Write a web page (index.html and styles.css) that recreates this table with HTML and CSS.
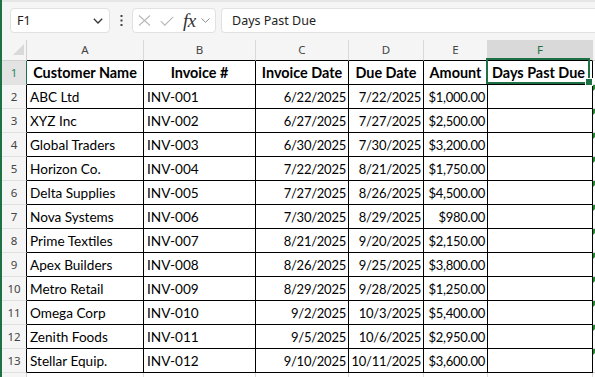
FILE: index.html
```html
<!DOCTYPE html>
<html lang="en">
<head>
    <meta charset="UTF-8">
    <title>Invoices - Sheet1</title>
    <link rel="stylesheet" href="styles.css">
</head>
<body>
    <div class="formula-bar">
        <div class="name-box">
            <span>F1</span>
            <svg width="10" height="6" viewBox="0 0 10 6"><polyline points="0.8,0.8 5,5 9.2,0.8" fill="none" stroke="#333" stroke-width="1.3"/></svg>
        </div>
        <div class="more">
            <svg width="3" height="11" viewBox="0 0 3 11"><rect x="0.5" y="0" width="2" height="2" fill="#444"/><rect x="0.5" y="4.5" width="2" height="2" fill="#444"/><rect x="0.5" y="9" width="2" height="2" fill="#444"/></svg>
        </div>
        <div class="fx-group">
            <svg class="x-icon" width="13" height="11" viewBox="0 0 13 11"><path d="M1 0.5 L12 10.5 M12 0.5 L1 10.5" stroke="#b8b8b8" stroke-width="1.1" fill="none"/></svg>
            <svg class="check-icon" width="14" height="10" viewBox="0 0 14 10"><polyline points="0.8,5.2 4.8,9.2 13.2,0.8" fill="none" stroke="#b8b8b8" stroke-width="1.1"/></svg>
            <span class="fx">fx</span>
            <svg width="9" height="5" viewBox="0 0 9 5"><polyline points="0.5,0.5 4.5,4.3 8.5,0.5" fill="none" stroke="#8a8a8a" stroke-width="1"/></svg>
        </div>
        <div class="formula-input">Days Past Due</div>
    </div>

    <div class="sheet">
        <!-- column headers -->
        <div class="c corner">
            <svg width="24" height="20" viewBox="0 0 24 20"><polygon points="22,4 22,15 11,15" fill="#d9d9d9"/></svg>
        </div>
        <div class="c ch">A</div>
        <div class="c ch">B</div>
        <div class="c ch">C</div>
        <div class="c ch">D</div>
        <div class="c ch">E</div>
        <div class="c ch on">F</div>
        <div class="c ch out"></div>

        <!-- row 1 -->
        <div class="c rh on">1</div>
        <div class="c t th">Customer Name</div>
        <div class="c t th">Invoice #</div>
        <div class="c t th">Invoice Date</div>
        <div class="c t th">Due Date</div>
        <div class="c t th">Amount</div>
        <div class="c t th active">Days Past Due<div class="selection"><span class="handle"></span></div></div>
        <div class="c"></div>

        <div class="c rh">2</div>
        <div class="c t">ABC Ltd</div>
        <div class="c t">INV-001</div>
        <div class="c t r">6/22/2025</div>
        <div class="c t r">7/22/2025</div>
        <div class="c t r">$1,000.00</div>
        <div class="c t"></div>
        <div class="c err"></div>

        <div class="c rh">3</div>
        <div class="c t">XYZ Inc</div>
        <div class="c t">INV-002</div>
        <div class="c t r">6/27/2025</div>
        <div class="c t r">7/27/2025</div>
        <div class="c t r">$2,500.00</div>
        <div class="c t"></div>
        <div class="c err"></div>

        <div class="c rh">4</div>
        <div class="c t">Global Traders</div>
        <div class="c t">INV-003</div>
        <div class="c t r">6/30/2025</div>
        <div class="c t r">7/30/2025</div>
        <div class="c t r">$3,200.00</div>
        <div class="c t"></div>
        <div class="c err"></div>

        <div class="c rh">5</div>
        <div class="c t">Horizon Co.</div>
        <div class="c t">INV-004</div>
        <div class="c t r">7/22/2025</div>
        <div class="c t r">8/21/2025</div>
        <div class="c t r">$1,750.00</div>
        <div class="c t"></div>
        <div class="c err"></div>

        <div class="c rh">6</div>
        <div class="c t">Delta Supplies</div>
        <div class="c t">INV-005</div>
        <div class="c t r">7/27/2025</div>
        <div class="c t r">8/26/2025</div>
        <div class="c t r">$4,500.00</div>
        <div class="c t"></div>
        <div class="c err"></div>

        <div class="c rh">7</div>
        <div class="c t">Nova Systems</div>
        <div class="c t">INV-006</div>
        <div class="c t r">7/30/2025</div>
        <div class="c t r">8/29/2025</div>
        <div class="c t r">$980.00</div>
        <div class="c t"></div>
        <div class="c err"></div>

        <div class="c rh">8</div>
        <div class="c t">Prime Textiles</div>
        <div class="c t">INV-007</div>
        <div class="c t r">8/21/2025</div>
        <div class="c t r">9/20/2025</div>
        <div class="c t r">$2,150.00</div>
        <div class="c t"></div>
        <div class="c err"></div>

        <div class="c rh">9</div>
        <div class="c t">Apex Builders</div>
        <div class="c t">INV-008</div>
        <div class="c t r">8/26/2025</div>
        <div class="c t r">9/25/2025</div>
        <div class="c t r">$3,800.00</div>
        <div class="c t"></div>
        <div class="c err"></div>

        <div class="c rh">10</div>
        <div class="c t">Metro Retail</div>
        <div class="c t">INV-009</div>
        <div class="c t r">8/29/2025</div>
        <div class="c t r">9/28/2025</div>
        <div class="c t r">$1,250.00</div>
        <div class="c t"></div>
        <div class="c err"></div>

        <div class="c rh">11</div>
        <div class="c t">Omega Corp</div>
        <div class="c t">INV-010</div>
        <div class="c t r">9/2/2025</div>
        <div class="c t r">10/3/2025</div>
        <div class="c t r">$5,400.00</div>
        <div class="c t"></div>
        <div class="c err"></div>

        <div class="c rh">12</div>
        <div class="c t">Zenith Foods</div>
        <div class="c t">INV-011</div>
        <div class="c t r">9/5/2025</div>
        <div class="c t r">10/6/2025</div>
        <div class="c t r">$2,950.00</div>
        <div class="c t"></div>
        <div class="c err"></div>

        <div class="c rh">13</div>
        <div class="c t">Stellar Equip.</div>
        <div class="c t">INV-012</div>
        <div class="c t r">9/10/2025</div>
        <div class="c t r">10/11/2025</div>
        <div class="c t r">$3,600.00</div>
        <div class="c t"></div>
        <div class="c err"></div>

        <div class="c rh out"></div>
        <div class="c"></div>
        <div class="c"></div>
        <div class="c"></div>
        <div class="c"></div>
        <div class="c"></div>
        <div class="c"></div>
        <div class="c"></div>
    </div>
</body>
</html>
```

FILE: styles.css
```css
html {
    overflow: hidden;
}
body {
    margin: 0;
    height: 377px;
    overflow: hidden;
    background: #fff;
    border-left: 2px solid #1e7145;
    font-family: 'Noto Sans', 'Open Sans', sans-serif;
}

/* formula bar */
.formula-bar {
    display: flex;
    align-items: flex-start;
    height: 40px;
    padding: 6px 0 0 8px;
    box-sizing: border-box;
    background: #f5f5f5;
    border-top: 2px solid #e6e6e6;
}
.name-box {
    display: flex;
    align-items: center;
    justify-content: space-between;
    width: 100px;
    height: 25px;
    box-sizing: border-box;
    padding: 0 6px 0 6px;
    background: #fff;
    border: 1px solid #e1e1e1;
    border-radius: 4px;
    font-size: 12.5px;
    color: #222;
}
.more {
    display: flex;
    align-items: center;
    height: 25px;
    margin-left: 10px;
}
.fx-group {
    display: flex;
    align-items: center;
    width: 84px;
    height: 25px;
    box-sizing: border-box;
    margin-left: 9px;
    padding-left: 5px;
    background: #fff;
    border: 1px solid #e1e1e1;
    border-radius: 4px;
}
.check-icon {
    margin-left: 9px;
}
.fx {
    margin-left: 9px;
    font-family: 'Liberation Serif', serif;
    font-style: italic;
    font-size: 19px;
    line-height: 20px;
    color: #333;
    letter-spacing: -0.5px;
}
.fx + svg {
    margin-left: 5px;
}
.formula-input {
    flex: 1;
    height: 25px;
    box-sizing: border-box;
    margin-left: 5px;
    padding-left: 10px;
    line-height: 23px;
    background: #fff;
    border: 1px solid #e1e1e1;
    border-right: none;
    border-radius: 4px 0 0 4px;
    font-size: 12.5px;
    color: #222;
}

/* grid */
.sheet {
    display: grid;
    grid-template-columns: 25px 117px 112px 93px 75px 64px 105px 1fr;
    grid-template-rows: 21px;
    grid-auto-rows: 24px;
    height: 337px;
    overflow: hidden;
}
.c {
    box-sizing: border-box;
    border-right: 1px solid #dadada;
    border-bottom: 1px solid #dadada;
    padding: 0 2px 0 3px;
    font-family: 'Lato', sans-serif;
    font-size: 13.6px;
    line-height: 24px;
    color: #000;
    white-space: nowrap;
    overflow: hidden;
    position: relative;
}
.corner, .ch, .rh {
    background: #f5f5f5;
    color: #444;
    text-align: center;
    font-family: 'Noto Sans', sans-serif;
    font-size: 11.5px;
    padding: 0;
}
.corner {
    border-bottom-color: #d0d0d0;
    border-right-color: #d0d0d0;
}
.corner svg {
    display: block;
}
.ch {
    line-height: 20px;
    border-right-color: #d9d9d9;
    border-bottom-color: #000;
}
.ch.out {
    border-bottom-color: #d0d0d0;
}
.ch.on {
    background: #d9d9d9;
    color: #1e7145;
}
.rh {
    line-height: 24px;
    border-right-color: #000;
    border-bottom-color: #e0e0e0;
}
.rh.on {
    background: #e3e3e3;
    color: #2f8a55;
    border-right: 1px solid #1e7145;
}
.rh.out {
    border-right-color: #d0d0d0;
}
.t {
    border-right-color: #000;
    border-bottom-color: #000;
}
.th {
    font-weight: bold;
    font-size: 14.4px;
    text-align: center;
    padding: 0;
}
.active {
    padding-right: 3px;
    overflow: visible;
}
.r {
    text-align: right;
    padding-left: 0;
    font-size: 13px;
    letter-spacing: -0.25px;
}

/* selected cell */
.selection {
    position: absolute;
    left: -2px;
    top: -3px;
    width: 104px;
    height: 26px;
    box-sizing: border-box;
    border: 2px solid #1e7145;
    z-index: 2;
}
.handle {
    position: absolute;
    right: -5px;
    bottom: -4px;
    width: 6px;
    height: 6px;
    background: #1e7145;
    border: 1px solid #fff;
}

/* error indicator */
.err::before {
    content: "";
    position: absolute;
    left: 0;
    top: 0;
    border-top: 6px solid #1b8a2e;
    border-right: 6px solid transparent;
}
```
